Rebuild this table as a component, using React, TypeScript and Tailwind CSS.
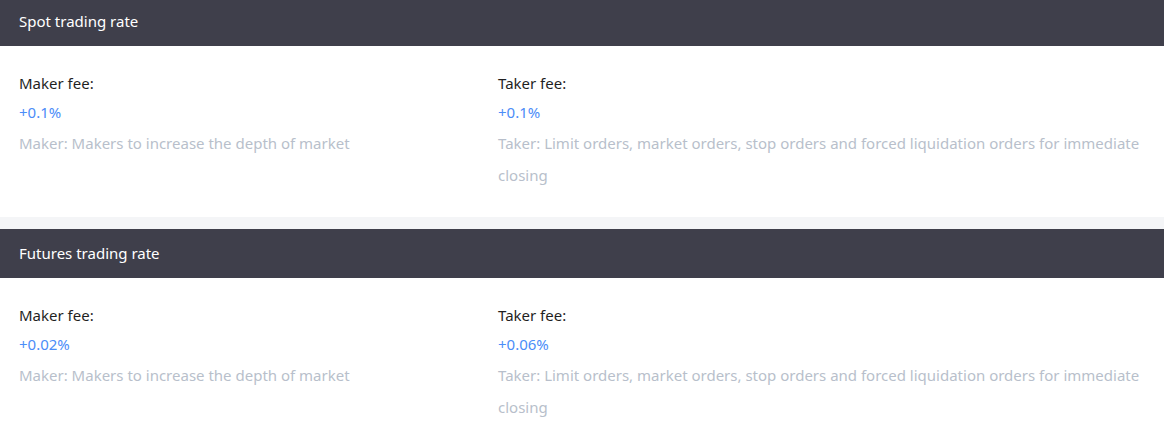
const SECTIONS = [
  {
    title: "Spot trading rate",
    maker: "+0.1%",
    taker: "+0.1%",
  },
  {
    title: "Futures trading rate",
    maker: "+0.02%",
    taker: "+0.06%",
  },
];

function FeeColumn({
  label,
  value,
  desc,
  className,
}: {
  label: string;
  value: string;
  desc: string;
  className?: string;
}) {
  return (
    <div className={className}>
      <p className="text-[15px] leading-[28px] text-[#1f1f1f]">{label}</p>
      <p className="mt-[1px] text-[15px] leading-[28px] text-[#4b8df8]">{value}</p>
      <p className="mt-[1px] text-[15px] leading-[32px] text-[#b8bfcb]">{desc}</p>
    </div>
  );
}

export default function App() {
  return (
    <div
      className="w-[1164px] h-[438px] overflow-hidden bg-[#f4f5f7]"
      style={{ fontFamily: '"Noto Sans", "Open Sans", sans-serif' }}
    >
      {SECTIONS.map((s, i) => (
        <section key={s.title} className={i === 0 ? "-mt-[3px]" : "mt-[12px]"}>
          <div className="flex h-[49px] items-center bg-[#3f3f4b] px-[19px] text-[15px] text-white">
            {s.title}
          </div>
          <div className="flex bg-white px-[19px] pt-[23px] pb-[26px]">
            <FeeColumn
              className="w-[479px] shrink-0"
              label="Maker fee:"
              value={s.maker}
              desc="Maker: Makers to increase the depth of market"
            />
            <FeeColumn
              className="flex-1"
              label="Taker fee:"
              value={s.taker}
              desc="Taker: Limit orders, market orders, stop orders and forced liquidation orders for immediate closing"
            />
          </div>
        </section>
      ))}
    </div>
  );
}
